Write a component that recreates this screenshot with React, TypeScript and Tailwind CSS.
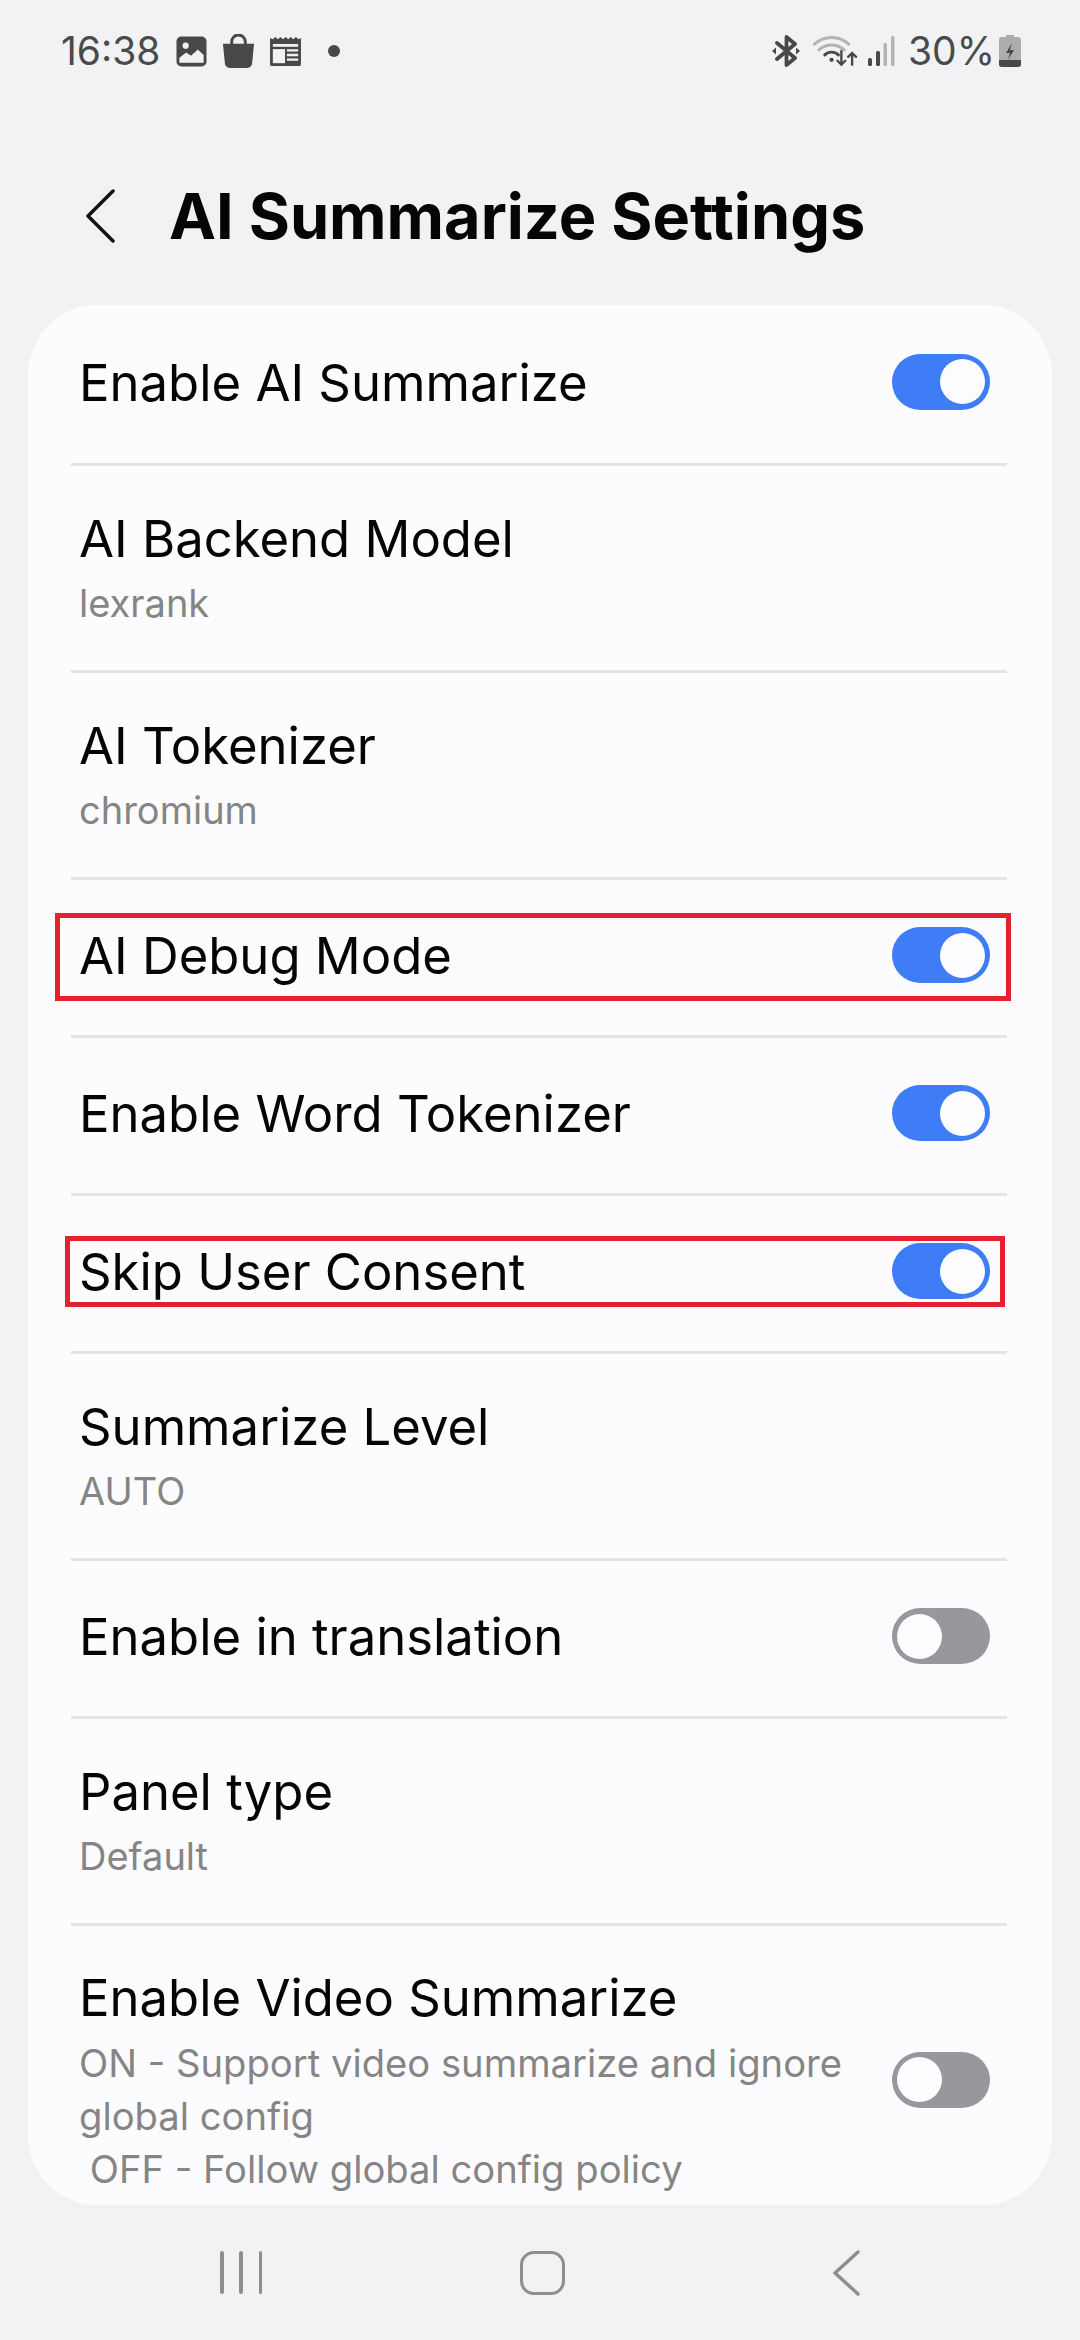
function Toggle({ on }: { on: boolean }) {
	return (
		<div
			className={`mb-[2px] flex h-[56px] w-[98px] shrink-0 items-center rounded-full px-[5px] ${on ? "justify-end bg-[#3e7df6]" : "justify-start bg-[#98989c]"}`}
		>
			<div className="h-[45px] w-[45px] rounded-full bg-[#fdfdff]" />
		</div>
	);
}

function Divider() {
	return <div className="ml-[43px] mr-[45px] h-[3px] shrink-0 bg-[#e4e4e6]" />;
}

function ToggleRow({ title, on, first }: { title: string; on: boolean; first?: boolean }) {
	return (
		<div
			className={`flex shrink-0 items-center justify-between pb-[3px] pl-[51px] pr-[62px] ${first ? "h-[158px]" : "h-[155px]"}`}
		>
			<span className="text-[50.800px] leading-[60px] text-[#050505]">{title}</span>
			<Toggle on={on} />
		</div>
	);
}

function ValueRow({ title, value }: { title: string; value: string }) {
	return (
		<div className="flex h-[204px] shrink-0 flex-col justify-center pl-[51px] pr-[62px]">
			<span className="text-[50.800px] leading-[60px] text-[#050505]">{title}</span>
			<span className="mt-[9px] text-[38px] leading-[50px] text-[#858585]">{value}</span>
		</div>
	);
}

function StatusLeft() {
	return (
		<div className="flex items-center">
			<span className="w-[100px] text-[39px] leading-[40px] text-[#4a4a4a]">16:38</span>
			<svg className="ml-[15px] h-[31px] w-[31px]" viewBox="0 0 32 32">
				<rect x="0.5" y="0.5" width="31" height="31" rx="5" fill="#484848" />
				<circle cx="10" cy="10" r="3.2" fill="#f2f2f4" />
				<path d="M3.5 27.5v-5l7-5.5 5 3.5 7-6.5 6 5.500v8z" fill="#f2f2f4" />
			</svg>
			<svg className="ml-[15px] h-[35px] w-[33px]" viewBox="0 0 32 36">
				<path d="M9 11V8a7 7 0 0 1 14 0v3" fill="none" stroke="#484848" strokeWidth="3" />
				<path d="M0 10h32l-2 20a5 5 0 0 1-5 5H7a5 5 0 0 1-5-5z" fill="#484848" />
			</svg>
			<svg className="ml-[14px] h-[30px] w-[33px]" viewBox="0 0 33 32">
				<path
					d="M0 2l3 1.500L5.500 1l3 2.500L11 1l3 2.500L16.500 1l3 2.500L22 1l3 2.500L27.500 1l3 2.500L33 2v28a2 2 0 0 1-2 2H2a2 2 0 0 1-2-2z"
					fill="#484848"
				/>
				<rect x="3" y="8.500" width="27" height="3" fill="#f2f2f4" />
				<rect x="3" y="14" width="13" height="15" fill="#f2f2f4" />
				<path d="M18 14h12v2.500H18zM18 19h12v2.500H18zM18 24h12v2.500H18z" fill="#f2f2f4" />
			</svg>
			<div className="ml-[26px] h-[12px] w-[12px] rounded-full bg-[#484848]" />
		</div>
	);
}

function StatusRight() {
	return (
		<div className="flex items-center">
			<svg className="h-[32px] w-[28px]" viewBox="0 0 28 32">
				<path
					d="M5 8l18 15-8.500 7V2L23 9 5 24"
					fill="none"
					stroke="#484848"
					strokeWidth="3.800"
					strokeLinejoin="round"
					strokeLinecap="round"
				/>
				<path d="M0 16l4-3.500v7zM28 16l-4-3.500v7z" fill="#484848" />
			</svg>
			<svg className="ml-[13px] h-[34px] w-[45px]" viewBox="0 0 46 34">
				<path d="M1.500 10a26 26 0 0 1 35 0" fill="none" stroke="#b3b3b3" strokeWidth="3" strokeLinecap="round" />
				<path d="M6 16a19 19 0 0 1 26 0" fill="none" stroke="#b3b3b3" strokeWidth="3" strokeLinecap="round" />
				<path d="M12 21a10 10 0 0 1 14 0" fill="none" stroke="#484848" strokeWidth="3" strokeLinecap="round" />
				<circle cx="19" cy="26" r="2.200" fill="#484848" />
				<path d="M29 17v14M25 27l4 4 4-4" fill="none" stroke="#484848" strokeWidth="2.400" strokeLinecap="round" />
				<path d="M40 31V19M36 23l4-4 4 4" fill="none" stroke="#484848" strokeWidth="2.400" strokeLinecap="round" />
			</svg>
			<svg className="ml-[10px] h-[30px] w-[27px]" viewBox="0 0 27 30">
				<rect x="0" y="22" width="4" height="8" rx="1.500" fill="#484848" />
				<rect x="8" y="15" width="4" height="15" rx="1.500" fill="#484848" />
				<rect x="15.500" y="7" width="3.500" height="23" rx="1.500" fill="#b3b3b3" />
				<rect x="23" y="0" width="3.500" height="30" rx="1.500" fill="#b3b3b3" />
			</svg>
			<span className="ml-[13px] text-[39px] leading-[40px] text-[#4a4a4a]">30%</span>
			<svg className="ml-[4px] h-[32px] w-[22px]" viewBox="0 0 22 32">
				<path
					d="M7 0h8v2h4a3 3 0 0 1 3 3v24a3 3 0 0 1-3 3H3a3 3 0 0 1-3-3V5a3 3 0 0 1 3-3h4z"
					fill="#adadad"
				/>
				<path d="M0 25h22v4a3 3 0 0 1-3 3H3a3 3 0 0 1-3-3z" fill="#484848" />
				<path d="M13 8l-6 10h4l-2 7 6-10h-4z" fill="#484848" />
			</svg>
		</div>
	);
}

export default function App() {
	return (
		<div
			className="relative flex h-[2340px] w-[1080px] flex-col overflow-hidden bg-[#f2f2f4]"
			style={{ fontFamily: "Inter, 'Noto Sans', sans-serif" }}
		>
			{/* Status bar */}
			<div className="flex h-[102px] shrink-0 items-center justify-between pl-[61px] pr-[59px]">
				<StatusLeft />
				<StatusRight />
			</div>

			{/* Header */}
			<div className="flex h-[203px] shrink-0 items-center pl-[85px] pt-[24px]">
				<svg className="h-[54px] w-[30px]" viewBox="0 0 30 54">
					<path d="M28 2L3 27l25 25" fill="none" stroke="#111" strokeWidth="3.500" strokeLinecap="round" strokeLinejoin="round" />
				</svg>
				<h1 className="ml-[54px] text-[63px] font-bold leading-[70px] text-[#050505]">AI Summarize Settings</h1>
			</div>

			{/* Settings card */}
			<div className="mx-[28px] flex h-[1900px] shrink-0 flex-col overflow-hidden rounded-[70px] bg-[#fcfcff]">
				<ToggleRow title="Enable AI Summarize" on first />
				<Divider />
				<ValueRow title="AI Backend Model" value="lexrank" />
				<Divider />
				<ValueRow title="AI Tokenizer" value="chromium" />
				<Divider />
				<ToggleRow title="AI Debug Mode" on />
				<Divider />
				<ToggleRow title="Enable Word Tokenizer" on />
				<Divider />
				<ToggleRow title="Skip User Consent" on />
				<Divider />
				<ValueRow title="Summarize Level" value="AUTO" />
				<Divider />
				<ToggleRow title="Enable in translation" on={false} />
				<Divider />
				<ValueRow title="Panel type" value="Default" />
				<Divider />
				<div className="flex shrink-0 items-center justify-between pl-[51px] pr-[62px] pt-[42px]">
					<div className="w-[800px]">
						<div className="text-[50.800px] leading-[60px] text-[#050505]">Enable Video Summarize</div>
						<div className="mt-[9px] whitespace-pre-wrap text-[38.200px] leading-[53px] text-[#858585]">
							{"ON - Support video summarize and ignore global config\n OFF - Follow global config policy"}
						</div>
					</div>
					<div className="mb-[3px]">
						<Toggle on={false} />
					</div>
				</div>
			</div>

			{/* Nav bar */}
			<div className="flex flex-1 items-center">
				<div className="ml-[220px] flex h-[43px] w-[42px] justify-between">
					<div className="h-full w-[3.500px] rounded-full bg-[#8e8e8e]" />
					<div className="h-full w-[3.500px] rounded-full bg-[#8e8e8e]" />
					<div className="h-full w-[3.500px] rounded-full bg-[#8e8e8e]" />
				</div>
				<div className="ml-[258px] h-[44px] w-[45px] rounded-[14px] border-[3.500px] border-[#8e8e8e]" />
				<svg className="ml-[267px] h-[46px] w-[28px]" viewBox="0 0 28 46">
					<path d="M26 2L3 23l23 21" fill="none" stroke="#8e8e8e" strokeWidth="3.500" strokeLinecap="round" strokeLinejoin="round" />
				</svg>
			</div>

			{/* Red annotation boxes */}
			<div className="absolute left-[55px] top-[913px] h-[88px] w-[956px] border-[5px] border-[#e4222d]" />
			<div className="absolute left-[65px] top-[1236px] h-[71px] w-[940px] border-[5px] border-[#e4222d]" />
		</div>
	);
}
